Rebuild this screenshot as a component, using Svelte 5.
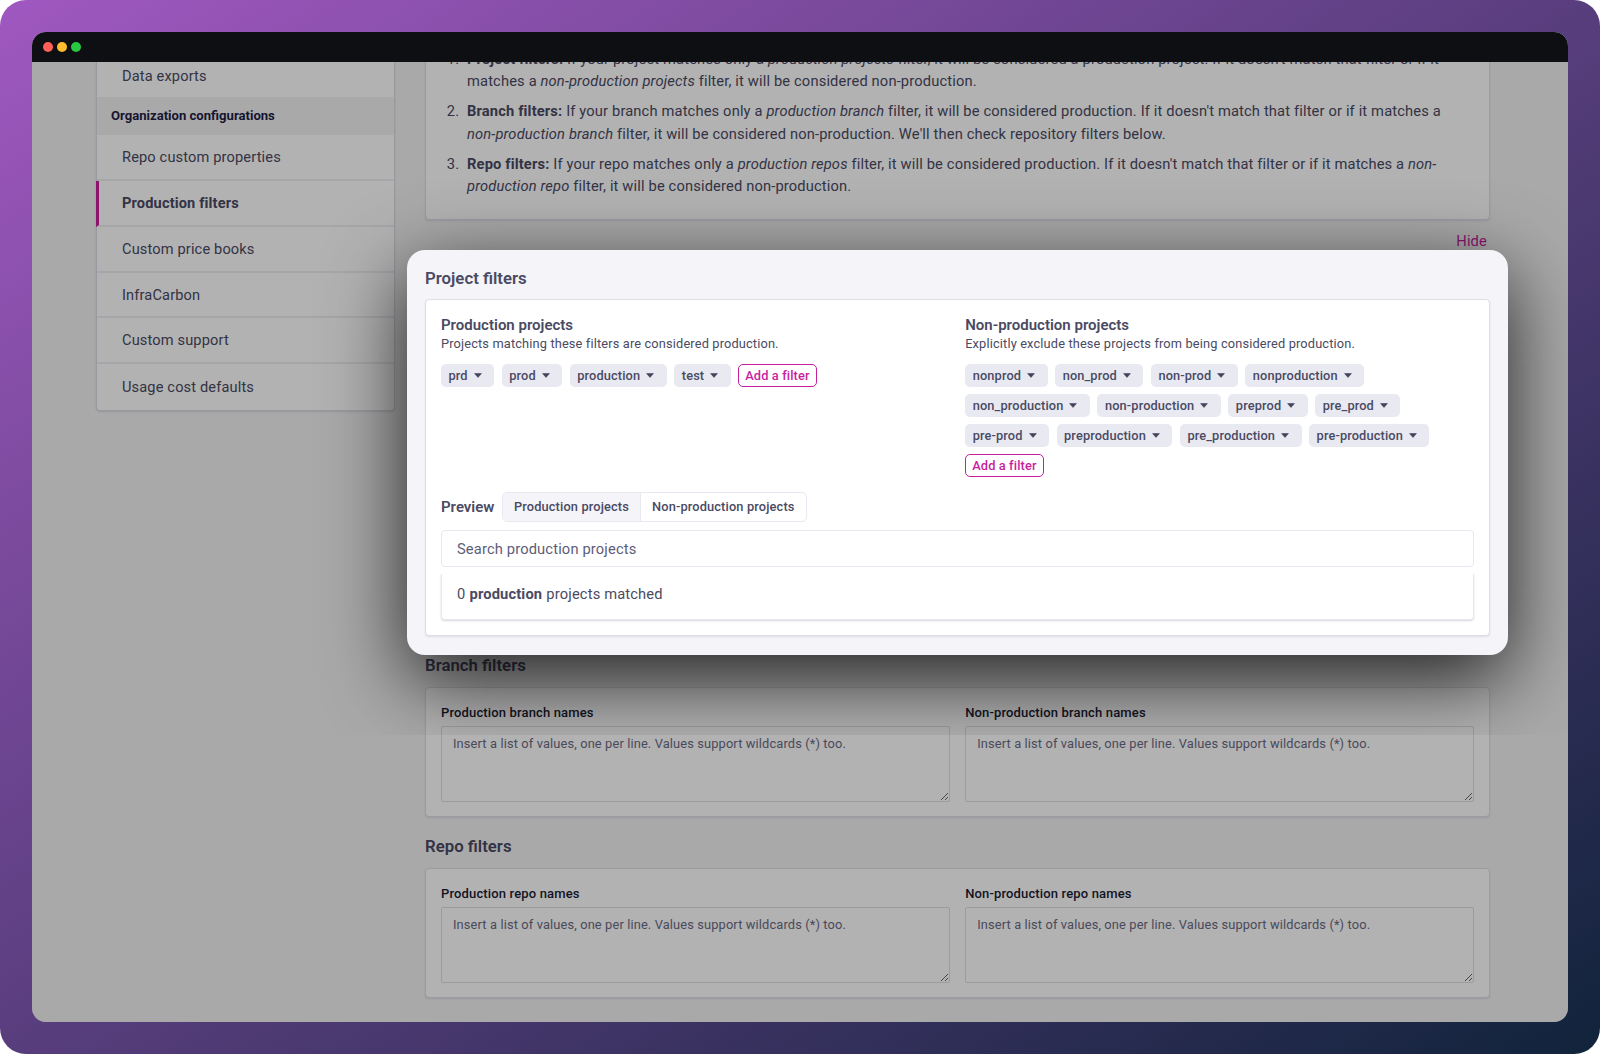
<script lang="ts">
	const ACCOUNT_ITEMS = ['Data exports'];
	const ORG_ITEMS = [
		'Repo custom properties',
		'Production filters',
		'Custom price books',
		'InfraCarbon',
		'Custom support',
		'Usage cost defaults'
	];
	const PROD_TAGS = ['prd', 'prod', 'production', 'test'];
	const NONPROD_TAGS = [
		'nonprod', 'non_prod', 'non-prod', 'nonproduction',
		'non_production', 'non-production', 'preprod', 'pre_prod',
		'pre-prod', 'preproduction', 'pre_production', 'pre-production'
	];
	const SECTIONS = [
		{ title: 'Branch filters', left: 'Production branch names', right: 'Non-production branch names' },
		{ title: 'Repo filters', left: 'Production repo names', right: 'Non-production repo names' }
	];
	const PLACEHOLDER = 'Insert a list of values, one per line. Values support wildcards (*) too.';
</script>

{#snippet tags(list: string[])}
	<div class="tags">
		{#each list as tag}
			<span class="tag">
				{tag}
				<svg width="8" height="5" viewBox="0 0 8 5" aria-hidden="true"><path d="M0.6 0.6h6.8L4 4.4z" fill="#43435a" stroke="#43435a" stroke-width="0.6" stroke-linejoin="round" /></svg>
			</span>
		{/each}
		<button class="add">Add a filter</button>
	</div>
{/snippet}

<div class="frame">
	<div class="window">
		<div class="titlebar">
			<span class="dot red"></span>
			<span class="dot yellow"></span>
			<span class="dot green"></span>
		</div>

		<div class="page">
			<div class="scroll">
				<nav class="sidebar">
					{#each ACCOUNT_ITEMS as item}
						<div class="nav-item first">{item}</div>
					{/each}
					<div class="nav-header">Organization configurations</div>
					{#each ORG_ITEMS as item}
						<div class="nav-item" class:active={item === 'Production filters'}>{item}</div>
					{/each}
				</nav>

				<main class="main">
					<div class="card intro">
						<ol>
							<li><b>Project filters:</b> If your project matches only a <i>production projects</i> filter, it will be considered a production project. If it doesn't match that filter or if it matches a <i>non-production projects</i> filter, it will be considered non-production.</li>
							<li><b>Branch filters:</b> If your branch matches only a <i>production branch</i> filter, it will be considered production. If it doesn't match that filter or if it matches a <i>non-production branch</i> filter, it will be considered non-production. We'll then check repository filters below.</li>
							<li><b>Repo filters:</b> If your repo matches only a <i>production repos</i> filter, it will be considered production. If it doesn't match that filter or if it matches a <i>non-production repo</i> filter, it will be considered non-production.</li>
						</ol>
					</div>
					<div class="hide-row"><span class="hide">Hide</span></div>
					<div class="modal-slot"></div>

					{#each SECTIONS as section}
						<section class="section">
							<h2>{section.title}</h2>
							<div class="card fields">
								<label class="field">
									<span>{section.left}</span>
									<textarea placeholder={PLACEHOLDER}></textarea>
								</label>
								<label class="field">
									<span>{section.right}</span>
									<textarea placeholder={PLACEHOLDER}></textarea>
								</label>
							</div>
						</section>
					{/each}
				</main>
			</div>

			<div class="overlay"></div>

			<div class="modal">
				<h2>Project filters</h2>
				<div class="card modal-card">
					<div class="columns">
						<div>
							<h3>Production projects</h3>
							<p>Projects matching these filters are considered production.</p>
							{@render tags(PROD_TAGS)}
						</div>
						<div>
							<h3>Non-production projects</h3>
							<p>Explicitly exclude these projects from being considered production.</p>
							{@render tags(NONPROD_TAGS)}
						</div>
					</div>
					<div class="preview-row">
						<span class="preview-label">Preview</span>
						<div class="tabs">
							<span class="tab on">Production projects</span>
							<span class="tab">Non-production projects</span>
						</div>
					</div>
					<input class="search" placeholder="Search production projects" />
					<div class="results">0 <b>production</b> projects matched</div>
				</div>
			</div>
		</div>
	</div>
</div>

<style>
	:global(body) {
		margin: 0;
		background: #fff;
		font-family: Roboto, 'Liberation Sans', sans-serif;
	}

	.frame {
		box-sizing: border-box;
		width: 1600px;
		height: 1054px;
		padding: 32px;
		border-radius: 26px;
		background: linear-gradient(to bottom right, #a058c0, #11233b);
	}

	.window {
		display: flex;
		flex-direction: column;
		height: 100%;
		border-radius: 14px;
		overflow: hidden;
		background: #f2f2f4;
	}

	.titlebar {
		display: flex;
		align-items: center;
		flex: none;
		gap: 4px;
		height: 30px;
		padding-left: 11px;
		background: #0e0f13;
	}

	.dot {
		width: 10px;
		height: 10px;
		border-radius: 50%;
	}
	.red { background: #ff5f57; }
	.yellow { background: #febc2e; }
	.green { background: #28c840; }

	.page {
		position: relative;
		flex: 1;
		overflow: hidden;
		color: #4a4a63;
		font-size: 14.7px;
		letter-spacing: 0.01em;
	}

	.scroll {
		display: grid;
		grid-template-columns: 299px 1065px;
		column-gap: 30px;
		margin-top: -30px;
		padding-left: 64px;
	}

	/* sidebar */

	.sidebar {
		align-self: start;
		margin-top: 19px;
		background: #fff;
		border: 1px solid #dcdce6;
		border-top: 0;
		border-radius: 0 0 4px 4px;
		box-shadow: 0 1px 2px rgba(30, 30, 60, 0.12);
	}

	.nav-item {
		box-sizing: border-box;
		height: 45.9px;
		padding-left: 25px;
		display: flex;
		align-items: center;
		border-bottom: 2px solid #eeeef3;
		font-size: 14.6px;
	}
	.nav-item:last-child {
		border-bottom: 0;
	}

	.nav-item.first {
		padding-top: 4px;
		border-bottom: 0;
	}

	.nav-item.active {
		margin-left: -1px;
		padding-left: 23px;
		border-left: 3px solid #c81e9d;
		font-weight: 700;
	}

	.nav-header {
		box-sizing: border-box;
		height: 38px;
		padding-left: 14px;
		display: flex;
		align-items: center;
		background: #f2f2f4;
		color: #1f1e45;
		font-size: 13.1px;
		font-weight: 700;
		letter-spacing: 0;
	}

	/* main column */

	.card {
		box-sizing: border-box;
		background: #fff;
		border: 1px solid #dfdfe8;
		border-radius: 4px;
		box-shadow: 0 1px 2px rgba(30, 30, 60, 0.1);
	}

	.intro {
		height: 188px;
		padding: 14.7px 30px 0 15px;
	}

	ol {
		margin: 0;
		padding-left: 22px;
		line-height: 22.5px;
	}
	li {
		padding-left: 4px;
	}
	li + li {
		margin-top: 7.5px;
	}

	.hide-row {
		display: flex;
		justify-content: flex-end;
		height: 20px;
		margin-top: 11px;
		padding-right: 3px;
		line-height: 20px;
	}

	.hide {
		color: #c81e9d;
	}

	.modal-slot {
		height: 403px;
	}

	.section h2,
	.modal h2 {
		font-size: 16.8px;
		line-height: 22px;
		font-weight: 600;
		letter-spacing: 0;
	}

	.section h2 {
		margin: 0 0 11px;
	}

	.section + .section {
		margin-top: 18px;
	}

	.fields {
		display: grid;
		grid-template-columns: 1fr 1fr;
		column-gap: 15.4px;
		height: 130px;
		padding: 15px;
	}

	.field {
		display: flex;
		flex-direction: column;
		gap: 3px;
		color: #1b1b33;
		font-size: 13px;
		font-weight: 500;
		line-height: 20px;
	}

	textarea {
		box-sizing: border-box;
		height: 75.5px;
		margin: 0;
		padding: 7px 11px;
		background: #fff;
		border: 1px solid #dedee6;
		border-radius: 2px;
		font: 400 12.85px/20px Roboto, sans-serif;
		letter-spacing: 0.01em;
		outline: none;
	}
	textarea::placeholder {
		color: #6a6a84;
		opacity: 1;
	}

	/* dim layer + popped out section */

	.overlay {
		position: absolute;
		inset: 0;
		background: rgba(0, 0, 0, 0.3);
	}

	.modal {
		position: absolute;
		left: 375px;
		top: 188px;
		box-sizing: border-box;
		width: 1101px;
		height: 405px;
		padding: 17px 18px 0;
		background: #f4f4f9;
		border-radius: 18px;
		box-shadow: 0 24px 80px rgba(0, 0, 0, 0.8);
		clip-path: inset(-200px -200px -80px -200px);
	}

	.modal h2 {
		margin: 0 0 10px;
	}

	.modal-card {
		height: 337px;
		padding: 15px;
	}

	.columns {
		display: grid;
		grid-template-columns: 1fr 1fr;
		column-gap: 15.4px;
		height: 177px;
	}

	h3 {
		margin: 1px 0 0;
		font-size: 15px;
		line-height: 19px;
		font-weight: 600;
		letter-spacing: 0;
	}

	p {
		margin: 0 0 11px;
		font-size: 12.8px;
		line-height: 18px;
	}

	.tags {
		display: flex;
		flex-wrap: wrap;
		gap: 7.5px;
	}

	.tag,
	.add {
		box-sizing: border-box;
		display: inline-flex;
		align-items: center;
		height: 22.5px;
		border-radius: 5px;
		font: 500 12.8px Roboto, sans-serif;
		letter-spacing: 0.01em;
	}

	.tag {
		gap: 6px;
		padding: 0 12.5px 0 7.5px;
		background: #e9e9f2;
		color: #4a4a63;
	}

	.add {
		padding: 0 6px;
		background: #fff;
		border: 1px solid #c81e9d;
		color: #c81e9d;
	}

	.preview-row {
		display: flex;
		align-items: center;
		gap: 7.5px;
		margin-bottom: 8px;
	}

	.preview-label {
		font-size: 15px;
		font-weight: 600;
		letter-spacing: 0;
	}

	.tabs {
		display: flex;
		height: 29.7px;
		border: 1px solid #e8e8f0;
		border-radius: 5px;
		overflow: hidden;
		box-sizing: border-box;
		font-size: 12.8px;
		font-weight: 500;
	}

	.tab {
		display: flex;
		align-items: center;
		padding: 0 11px;
	}

	.tab.on {
		background: #f4f4f9;
		border-right: 1px solid #e8e8f0;
	}

	.search {
		box-sizing: border-box;
		display: block;
		width: 100%;
		height: 37.5px;
		padding: 1px 15px 0;
		border: 1px solid #e7e7f0;
		border-radius: 4px;
		font: 400 14.7px Roboto, sans-serif;
		letter-spacing: 0.01em;
		outline: none;
	}
	.search::placeholder {
		color: #5d5d78;
		opacity: 1;
	}

	.results {
		box-sizing: border-box;
		height: 46px;
		margin-top: 7px;
		padding: 0 15px 6px;
		display: flex;
		align-items: center;
		gap: 0.28em;
		border: 1px solid #e7e7f0;
		border-top: 0;
		border-radius: 0 0 4px 4px;
		box-shadow: 0 1px 2px rgba(30, 30, 60, 0.18);
	}
</style>
